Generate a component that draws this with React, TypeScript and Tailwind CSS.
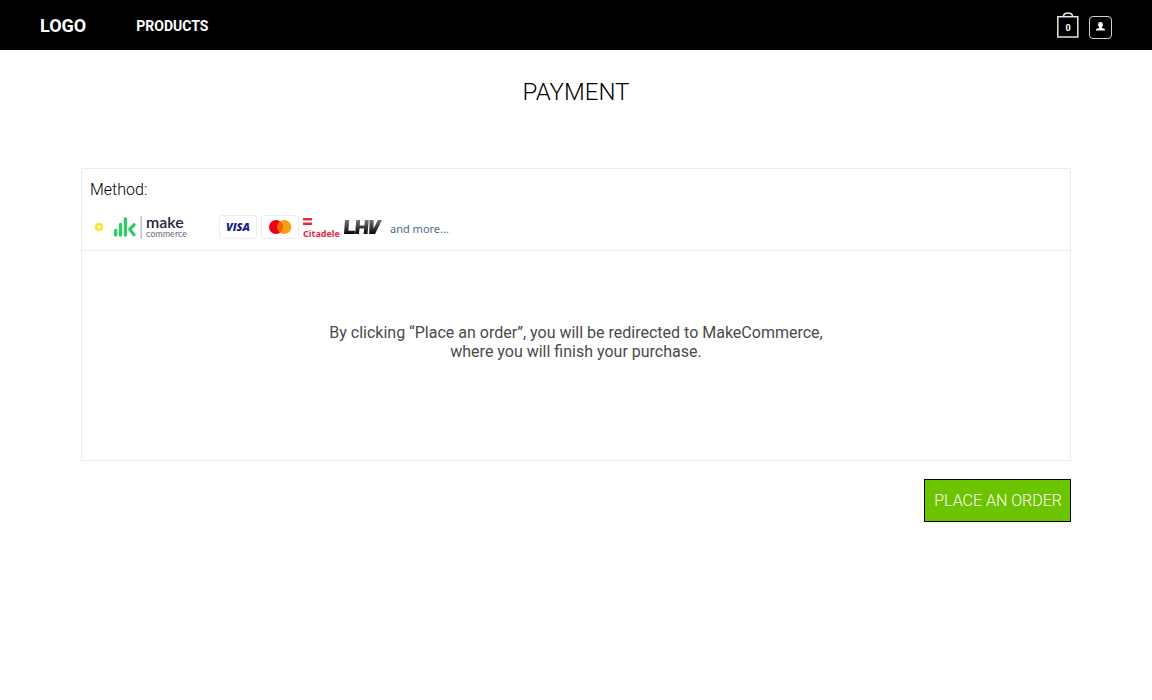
function BagIcon() {
  return (
    <svg width="22" height="26" viewBox="0 0 22 26" fill="none" stroke="#e4e4e4" aria-hidden="true">
      <path d="M.8 4.800H20.800V25H.8Z" strokeWidth="1.500" />
      <path d="M6.500 4.500C6.500 2.300 8 1 11 1S15.500 2.300 15.500 4.500" strokeWidth="1.600" />
    </svg>
  );
}

function UserIcon() {
  return (
    <svg width="9" height="9" viewBox="0 0 9 9" fill="#fff" aria-hidden="true">
      <path d="M4.500 0C2.900 0 2.100 1 2.100 2.500C2.100 3.600 2.500 4.600 3.200 5.200V6L.8 6.700C.2 6.900 0 7.400 0 8.600H9C9 7.400 8.800 6.900 8.200 6.700L5.800 6V5.200C6.500 4.600 6.900 3.600 6.900 2.500C6.900 1 6.100 0 4.500 0Z" />
    </svg>
  );
}

function MakeCommerceLogo() {
  return (
    <span className="flex w-[73px] items-center">
      <svg width="28" height="24" viewBox="0 0 28 24" fill="none" className="shrink-0" aria-hidden="true">
        <g stroke="#2fcc66" strokeWidth="3.300" strokeLinecap="round">
          <path d="M1.700 15.500V20M6.500 9.300V20M11.400 3.800V20" />
          <path d="M20 9.800L15.700 14.300L20 19.800" strokeLinejoin="round" />
        </g>
        <path d="M27.200 1V24" stroke="#c3c4ca" strokeWidth="1.600" />
      </svg>
      <span className="ml-1 flex flex-col font-['Lato',sans-serif]">
        <span className="text-[16px] leading-[14px] font-semibold text-[#25273f]">make</span>
        <span className="text-[9px] leading-[10px] text-[#686a7c]">commerce</span>
      </span>
    </span>
  );
}

function MastercardMark() {
  return (
    <svg width="24" height="14" viewBox="0 0 24 14" aria-hidden="true">
      <circle cx="8" cy="7" r="7" fill="#eb001b" />
      <circle cx="16.300" cy="7" r="7" fill="#f79e1b" />
      <path d="M12.150 1.350A7 7 0 0 1 12.150 12.650A7 7 0 0 1 12.150 1.350Z" fill="#ff5f00" />
    </svg>
  );
}

function LhvLogo() {
  return (
    <svg width="38" height="16" viewBox="0 0 38 16" className="shrink-0" role="img" aria-label="LHV">
      <defs>
        <linearGradient id="steel" x1="0" y1="0" x2="0" y2="1">
          <stop offset="0" stopColor="#767676" />
          <stop offset="1" stopColor="#050505" />
        </linearGradient>
      </defs>
      <path
        fill="url(#steel)"
        d="M1 1H5.200L4.400 11.800H11L10.800 15H0ZM12.300 1H16.200L15.700 6.500H20.400L20.900 1H24.800L23.500 15H19.600L20.200 9.500H15.500L15 15H11.100ZM25.600 1H29.700L29.500 9.700L33.800 1H38L31 15H25.200Z"
      />
    </svg>
  );
}

export default function App() {
  return (
    <div className="min-h-screen bg-white font-['Roboto',sans-serif] text-black">
      <header className="flex h-[50px] items-center justify-between bg-black px-10 text-white">
        <nav className="flex items-center gap-[50px] pt-0.5 font-bold">
          <a href="#" className="text-[18px] leading-6">LOGO</a>
          <a href="#products" className="text-[14px] leading-6">PRODUCTS</a>
        </nav>
        <div className="flex items-center gap-2.5">
          <button type="button" aria-label="Cart" className="relative">
            <BagIcon />
            <span className="absolute inset-x-0 top-2.5 text-center text-[9px] leading-3 font-bold">0</span>
          </button>
          <button
            type="button"
            aria-label="Account"
            className="mt-1 flex h-[23px] w-[23px] items-center justify-center rounded border border-[#d0d0d0] pb-0.5"
          >
            <UserIcon />
          </button>
        </div>
      </header>

      <main className="mx-auto max-w-[1022px] px-4">
        <h1 className="pt-7 text-center text-[24px] leading-7 font-light">PAYMENT</h1>

        <section className="mt-[62px] border border-[#ececec]">
          <fieldset className="border-b border-[#ececec] px-2 pb-[11px]">
            <legend className="float-left w-full pt-[11px] text-[16px] leading-5 font-light">Method:</legend>
            <label className="clear-both flex items-center pt-[15px] pl-[5px]">
              <input
                type="radio"
                name="method"
                defaultChecked
                className="h-2 w-2 shrink-0 appearance-none rounded-full border-2 border-[#fce300] bg-white"
              />
              <span className="ml-[11px]">
                <MakeCommerceLogo />
              </span>
              <span className="ml-8 flex items-center gap-1">
                <span className="flex h-6 w-[38px] items-center justify-center rounded-[3px] border border-[#ececec] font-['Open_Sans',sans-serif] text-[11px] leading-3 font-extrabold text-[#1a2581] italic">
                  VISA
                </span>
                <span className="flex h-6 w-[38px] items-center justify-center rounded-[3px] border border-[#ececec]">
                  <MastercardMark />
                </span>
                <span className="flex h-6 w-[37px] flex-col justify-between pt-[3px] font-['Noto_Sans',sans-serif] text-[9px] leading-[11px] font-bold text-[#e62a45]">
                  <svg width="9" height="7" viewBox="0 0 9 7" fill="#e62a45" className="shrink-0" aria-hidden="true">
                    <path d="M0 0H9V2.500H0ZM0 4.500H9V7H0Z" />
                  </svg>
                  Citadele
                </span>
                <LhvLogo />
                <span className="ml-1 pt-1 font-['Noto_Sans',sans-serif] text-[11px] leading-4 text-[#4c6c88]">and more...</span>
              </span>
            </label>
          </fieldset>
          <p className="px-4 pt-[72px] pb-[99px] text-center text-[16px] leading-[19px] text-[#4a4a4a]">
            By clicking “Place an order”, you will be redirected to MakeCommerce,
            <br />
            where you will finish your purchase.
          </p>
        </section>

        <div className="flex justify-end pt-[18px]">
          <button
            type="button"
            className="border border-black bg-[#6cc300] py-[11px] pr-2 pl-[9px] text-[16px] leading-[19px] font-light text-white"
          >
            PLACE AN ORDER
          </button>
        </div>
      </main>
    </div>
  );
}
